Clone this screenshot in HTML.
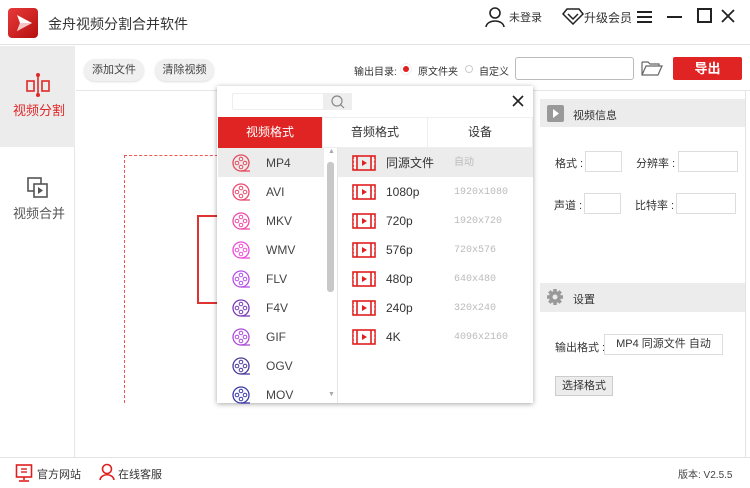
<!DOCTYPE html>
<html><head><meta charset="utf-8"><style>
*{margin:0;padding:0;box-sizing:border-box}
body{width:750px;height:488px;position:relative;overflow:hidden;background:#fff;font-family:"Liberation Sans","Noto Sans CJK SC",sans-serif;font-size:12px;color:#333}
.a{position:absolute}
.btn{position:absolute;background:#f0f0f0;border-radius:12px;height:22px;line-height:22px;text-align:center;font-size:11px;color:#444;box-shadow:0 1px 2px #ddd}
.row{position:absolute;height:29px;line-height:31px;font-size:12px}
.inp{position:absolute;border:1px solid #ddd;background:#fff;height:21px}
</style></head><body>
<div class="a" style="left:0;top:0;width:750px;height:45px;border-bottom:1px solid #e3e3e3"></div>
<div class="a" style="left:8px;top:8px;width:30px;height:30px;border-radius:4px;background:linear-gradient(135deg,#e83a3a,#b51010)"></div>
<svg class="a" style="left:8px;top:8px" width="30" height="30"><path d="M9 7 L24 15 L9 23 L12 15 Z" fill="#fff"/><path d="M12 15 L24 15 L9 23Z" fill="#f3c5c5"/></svg>
<div class="a" style="left:48px;top:14px;font-size:14px;color:#333">金舟视频分割合并软件</div>
<svg class="a" style="left:484px;top:6px" width="22" height="22"><circle cx="11" cy="7" r="5" fill="none" stroke="#222" stroke-width="1.6"/><path d="M2 21 C3 13 19 13 20 21" fill="none" stroke="#222" stroke-width="1.6"/></svg>
<div class="a" style="left:509px;top:9px;font-size:11px">未登录</div>
<svg class="a" style="left:562px;top:7px" width="22" height="18"><path d="M5 2 H17 L21 7 L11 17 L1 7 Z M6 7 L11 12 L16 7" fill="none" stroke="#222" stroke-width="1.5"/></svg>
<div class="a" style="left:584px;top:9px;font-size:12px">升级会员</div>
<div class="a" style="left:637px;top:11px;width:15px;height:2px;background:#222;box-shadow:0 5px 0 #222,0 10px 0 #222"></div>
<div class="a" style="left:667px;top:16px;width:15px;height:2px;background:#222"></div>
<div class="a" style="left:697px;top:8px;width:15px;height:15px;border:2px solid #222"></div>
<svg class="a" style="left:720px;top:8px" width="16" height="16"><path d="M2 2 L14 14 M14 2 L2 14" stroke="#222" stroke-width="1.8"/></svg>
<div class="a" style="left:0;top:46px;width:75px;height:411px;border-right:1px solid #e6e6e6;background:#fff"></div>
<div class="a" style="left:0;top:46px;width:75px;height:101px;background:#ececec"></div>
<svg class="a" style="left:25px;top:72px" width="26" height="26"><rect x="2" y="9" width="7" height="10" fill="none" stroke="#e02828" stroke-width="1.6"/><rect x="17" y="9" width="7" height="10" fill="none" stroke="#e02828" stroke-width="1.6"/><line x1="13" y1="3" x2="13" y2="23" stroke="#e02828" stroke-width="1.6"/><circle cx="13" cy="3" r="2" fill="#e02828"/><circle cx="13" cy="23" r="2" fill="#e02828"/></svg>
<div class="a" style="left:13px;top:100px;font-size:13px;color:#e02828">视频分割</div>
<svg class="a" style="left:26px;top:176px" width="24" height="24"><rect x="2" y="2" width="13" height="13" fill="none" stroke="#555" stroke-width="1.6"/><rect x="8" y="8" width="13" height="13" fill="#fff" stroke="#555" stroke-width="1.6"/><path d="M12 11 L17 14.5 L12 18Z" fill="#555"/></svg>
<div class="a" style="left:13px;top:203px;font-size:13px;color:#555">视频合并</div>
<div class="a" style="left:76px;top:90px;width:674px;height:1px;background:#e6e6e6"></div>
<div class="btn" style="left:84px;top:59px;width:60px">添加文件</div>
<div class="btn" style="left:155px;top:59px;width:59px">清除视频</div>
<div class="a" style="left:354px;top:63px;font-size:10px">输出目录:</div>
<div class="a" style="left:403px;top:66px;width:6px;height:6px;border-radius:50%;background:#e02020;box-shadow:0 0 0 2px #fff,0 0 0 3px #eee"></div>
<div class="a" style="left:418px;top:63px;font-size:10px">原文件夹</div>
<div class="a" style="left:465px;top:65px;width:8px;height:8px;border-radius:50%;border:1px solid #ccc"></div>
<div class="a" style="left:479px;top:63px;font-size:10px">自定义</div>
<div class="a" style="left:515px;top:57px;width:119px;height:23px;border:1px solid #bbb;border-radius:3px"></div>
<svg class="a" style="left:641px;top:60px" width="22" height="16"><path d="M1 2 H7 L9 4 H18 V6 M1 2 V15 H17 L21 6 H5 L1 15" fill="none" stroke="#666" stroke-width="1.2"/></svg>
<div class="a" style="left:673px;top:57px;width:69px;height:23px;background:#e02323;border-radius:2px;color:#fff;font-weight:bold;font-size:13px;text-align:center;line-height:23px">导出</div>
<div class="a" style="left:124px;top:155px;width:200px;height:248px;border:1px dashed #e55;border-bottom:0"></div>
<div class="a" style="left:197px;top:215px;width:40px;height:89px;border:2px solid #d33"></div>
<div class="a" style="left:540px;top:99px;width:205px;height:28px;background:#ececec"></div>
<div class="a" style="left:547px;top:105px;width:17px;height:17px;background:#999;border-radius:2px"></div>
<svg class="a" style="left:547px;top:105px" width="17" height="17"><path d="M6 4 L12 8.5 L6 13Z" fill="#fff"/></svg>
<div class="a" style="left:573px;top:107px;font-size:11px">视频信息</div>
<div class="a" style="left:555px;top:155px;font-size:11px">格式 :</div>
<div class="inp" style="left:585px;top:151px;width:37px"></div>
<div class="a" style="left:636px;top:155px;font-size:11px">分辨率 :</div>
<div class="inp" style="left:678px;top:151px;width:60px"></div>
<div class="a" style="left:554px;top:197px;font-size:11px">声道 :</div>
<div class="inp" style="left:584px;top:193px;width:37px"></div>
<div class="a" style="left:635px;top:197px;font-size:11px">比特率 :</div>
<div class="inp" style="left:676px;top:193px;width:60px"></div>
<div class="a" style="left:540px;top:283px;width:205px;height:29px;background:#ececec"></div>
<svg class="a" style="left:546px;top:288px" width="18" height="18"><circle cx="9" cy="9" r="6" fill="#999"/><g stroke="#999" stroke-width="3.5"><line x1="9" y1="1" x2="9" y2="17"/><line x1="1" y1="9" x2="17" y2="9"/><line x1="3.3" y1="3.3" x2="14.7" y2="14.7"/><line x1="14.7" y1="3.3" x2="3.3" y2="14.7"/></g><circle cx="9" cy="9" r="2.5" fill="#ececec"/></svg>
<div class="a" style="left:573px;top:291px;font-size:11px">设置</div>
<div class="a" style="left:555px;top:339px;font-size:11px">输出格式 :</div>
<div class="inp" style="left:604px;top:334px;width:119px;font-size:11px;text-align:center;line-height:19px">MP4 同源文件 自动</div>
<div class="a" style="left:555px;top:376px;width:58px;height:20px;background:#ececec;border:1px solid #ccc;font-size:11px;text-align:center;line-height:18px">选择格式</div>
<div class="a" style="left:745px;top:91px;width:1px;height:366px;background:#e3e3e3"></div>
<div class="a" style="left:217px;top:86px;width:316px;height:317px;background:#fff;box-shadow:0 1px 5px rgba(0,0,0,.35)"></div>
<div class="a" style="left:232px;top:93px;width:120px;height:17px;border:1px solid #eee;border-radius:2px"></div>
<div class="a" style="left:323px;top:93px;width:29px;height:17px;background:#eee"></div>
<svg class="a" style="left:330px;top:94px" width="16" height="16"><circle cx="7" cy="7" r="5" fill="none" stroke="#888" stroke-width="1.2"/><line x1="10.5" y1="10.5" x2="14" y2="14" stroke="#888" stroke-width="1.2"/></svg>
<svg class="a" style="left:512px;top:95px" width="12" height="12"><path d="M1 1 L11 11 M11 1 L1 11" stroke="#222" stroke-width="1.6"/></svg>
<div class="a" style="left:218px;top:117px;width:104px;height:31px;background:#e02323;color:#fff;text-align:center;line-height:31px;font-size:12px">视频格式</div>
<div class="a" style="left:322px;top:117px;width:106px;height:31px;border:1px solid #eee;text-align:center;line-height:29px">音频格式</div>
<div class="a" style="left:428px;top:117px;width:105px;height:31px;border:1px solid #eee;border-left:0;text-align:center;line-height:29px">设备</div>
<div class="a" style="left:218px;top:148px;width:106px;height:29px;background:#ececec"></div>
<div class="a" style="left:337px;top:148px;width:1px;height:255px;background:#e5e5e5"></div>
<div class="a" style="left:327px;top:162px;width:7px;height:130px;background:#c8c8c8;border-radius:3px"></div>
<div class="a" style="left:328px;top:148px;font-size:7px;color:#aaa">▲</div>
<div class="a" style="left:328px;top:391px;font-size:7px;color:#aaa">▼</div>
<div class="a" style="left:338px;top:148px;width:195px;height:29px;background:#ececec"></div>
<div id="L"></div>
<div class="a" style="left:0;top:457px;width:750px;height:1px;background:#e3e3e3"></div>
<svg class="a" style="left:15px;top:464px" width="18" height="18"><rect x="1.5" y="1" width="15" height="12" fill="none" stroke="#e02020" stroke-width="1.6"/><line x1="6" y1="5" x2="12" y2="5" stroke="#e02020" stroke-width="1.4"/><line x1="6" y1="8" x2="12" y2="8" stroke="#e02020" stroke-width="1.4"/><line x1="9" y1="13" x2="9" y2="16" stroke="#e02020" stroke-width="1.6"/><line x1="4" y1="17" x2="14" y2="17" stroke="#e02020" stroke-width="1.6"/></svg>
<div class="a" style="left:37px;top:466px;font-size:11px">官方网站</div>
<svg class="a" style="left:99px;top:463px" width="16" height="18"><circle cx="8" cy="6" r="4.5" fill="none" stroke="#e02020" stroke-width="1.6"/><path d="M1 17 C2 10 14 10 15 17" fill="none" stroke="#e02020" stroke-width="1.6"/></svg>
<div class="a" style="left:118px;top:466px;font-size:11px">在线客服</div>
<div class="a" style="left:678px;top:466px;font-size:10px;color:#444">版本: V2.5.5</div>
<script>
var f=[["MP4","#e34a5e"],["AVI","#e84a6e"],["MKV","#ee4aa8"],["WMV","#ee4ad8"],["FLV","#b450e4"],["F4V","#7a3ab8"],["GIF","#ac4ad8"],["OGV","#4a3a9a"],["MOV","#3a3aaa"]];
var r=[["同源文件","自动"],["1080p","1920x1080"],["720p","1920x720"],["576p","720x576"],["480p","640x480"],["240p","320x240"],["4K","4096x2160"]];
var h="";
f.forEach(function(x,i){var y=148+i*29;if(y>390)return;
h+='<svg class="a" style="left:231px;top:'+(y+6)+'px" width="22" height="20"><circle cx="10" cy="9" r="8" fill="none" stroke="'+x[1]+'" stroke-width="1.3"/><circle cx="10" cy="5" r="1.8" fill="none" stroke="'+x[1]+'"/><circle cx="10" cy="13" r="1.8" fill="none" stroke="'+x[1]+'"/><circle cx="6" cy="9" r="1.8" fill="none" stroke="'+x[1]+'"/><circle cx="14" cy="9" r="1.8" fill="none" stroke="'+x[1]+'"/><path d="M10 17 H19" stroke="'+x[1]+'" stroke-width="1.3"/></svg>';
h+='<div class="row" style="left:266px;top:'+y+'px;color:#444">'+x[0]+'</div>';});
r.forEach(function(x,i){var y=148+i*29;
h+='<svg class="a" style="left:352px;top:'+(y+7)+'px" width="24" height="16"><rect x="1" y="1" width="22" height="14" fill="none" stroke="#e02020" stroke-width="1.6"/><g stroke="#e02020" stroke-width="1.6"><line x1="5" y1="1" x2="5" y2="15"/><line x1="19" y1="1" x2="19" y2="15"/></g><g fill="#fff"><rect x="1.5" y="4" width="2.5" height="1.5"/><rect x="1.5" y="8" width="2.5" height="1.5"/><rect x="1.5" y="12" width="2.5" height="1"/><rect x="20" y="4" width="2.5" height="1.5"/><rect x="20" y="8" width="2.5" height="1.5"/></g><path d="M10 5 L15 8 L10 11Z" fill="#e02020"/></svg>';
h+='<div class="row" style="left:386px;top:'+y+'px;color:#333">'+x[0]+'</div><div class="row" style="left:454px;top:'+y+'px;color:#bbb;font-size:10px;font-family:\'Liberation Mono\',monospace">'+x[1]+'</div>';});
document.getElementById("L").innerHTML=h;
</script>
</body></html>
